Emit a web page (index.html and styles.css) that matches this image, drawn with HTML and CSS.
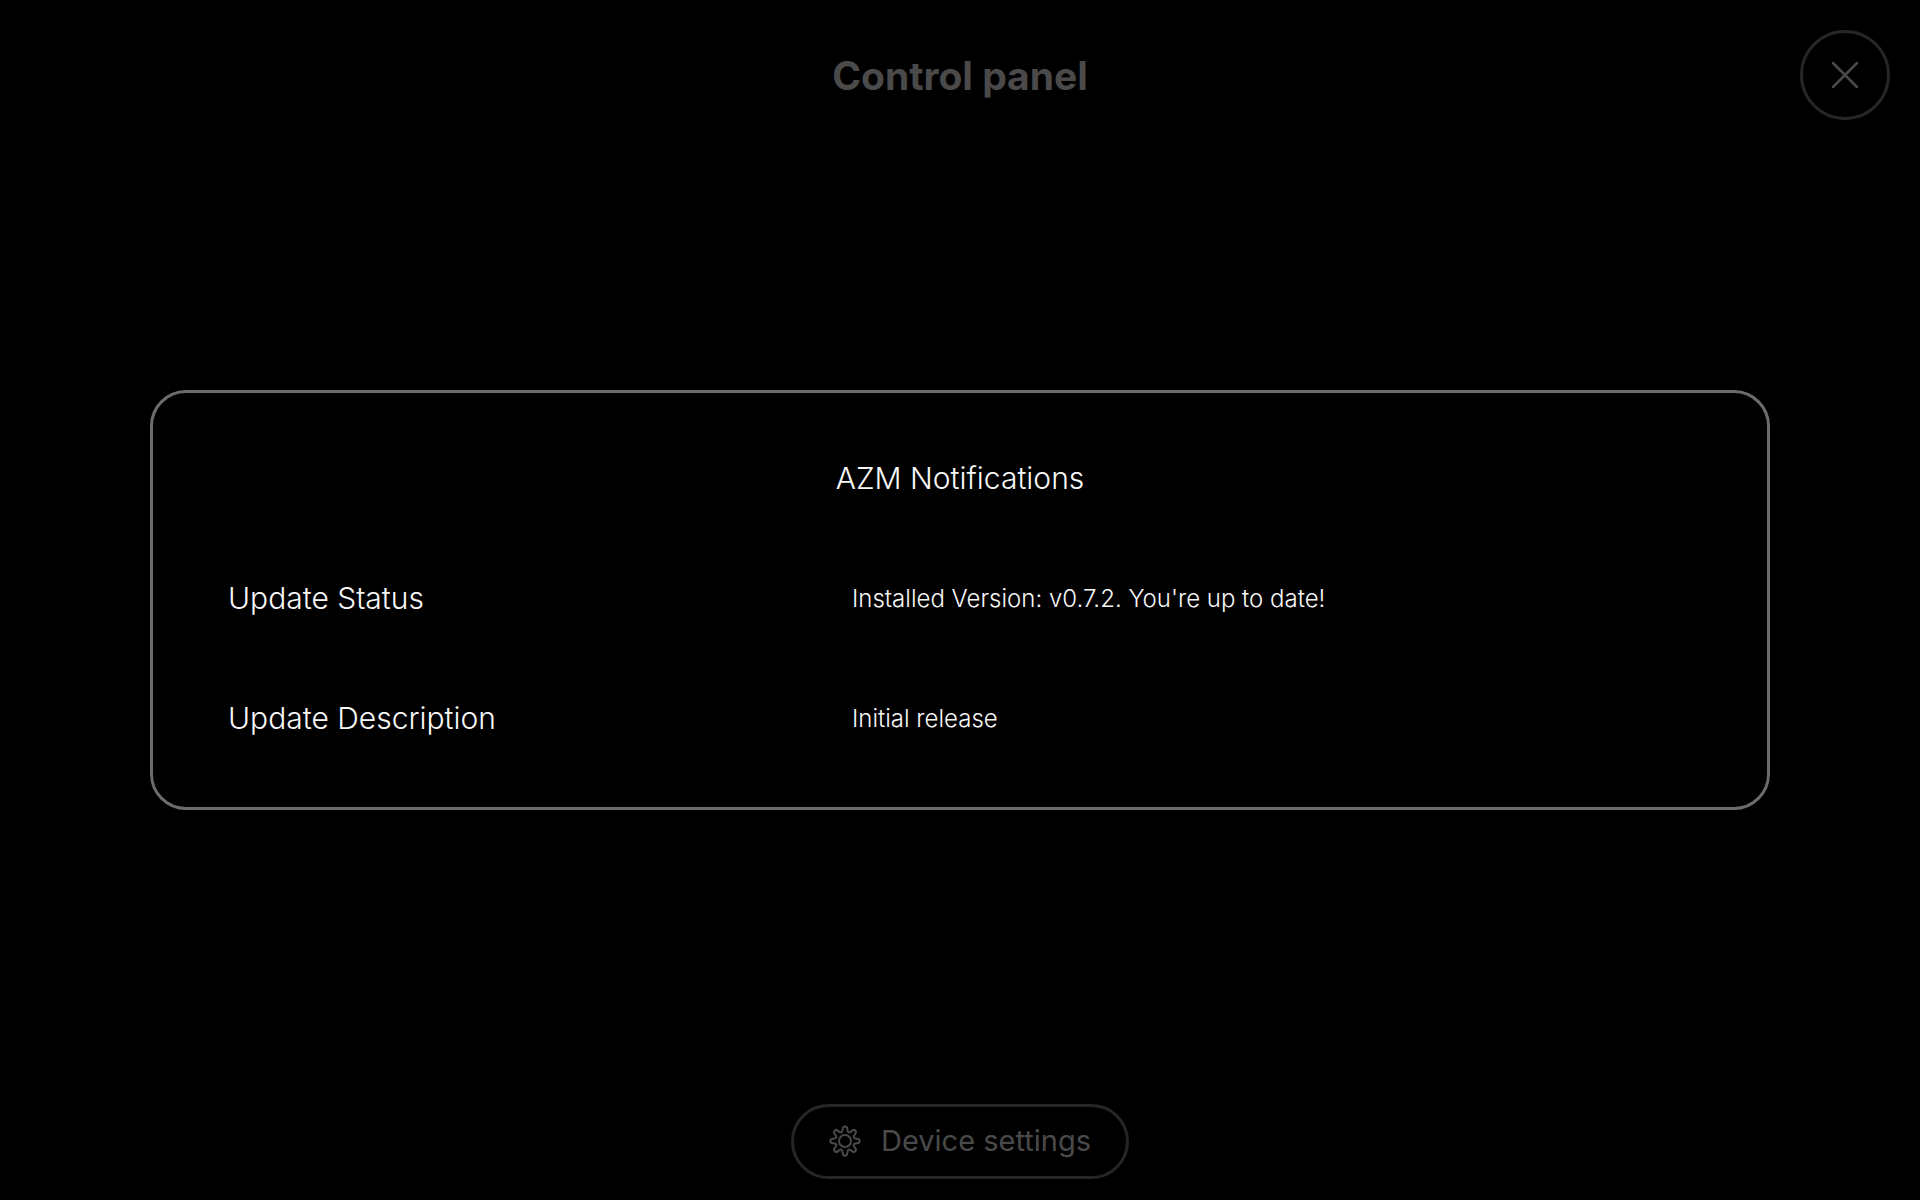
FILE: index.html
```html
<!DOCTYPE html>
<html lang="en">
<head>
<meta charset="utf-8">
<meta name="viewport" content="width=device-width, initial-scale=1">
<title>Control panel</title>
<link rel="stylesheet" href="styles.css">
</head>
<body>
<div class="screen">
  <header class="topbar">
    <h1 class="title">Control panel</h1>
    <button class="close" type="button" aria-label="Close">
      <svg class="close-icon" viewBox="0 0 28 28" aria-hidden="true"><path d="M2 2 26 26M26 2 2 26"/></svg>
    </button>
  </header>
  <main class="content">
    <section class="panel">
      <h2 class="panel-title">AZM Notifications</h2>
      <dl class="rows">
        <div class="row">
          <dt class="label">Update Status</dt>
          <dd class="value">Installed Version: v0.7.2. You're up to date!</dd>
        </div>
        <div class="row">
          <dt class="label">Update Description</dt>
          <dd class="value">Initial release</dd>
        </div>
      </dl>
    </section>
  </main>
  <footer class="footer">
    <button class="settings" type="button">
      <svg class="gear" viewBox="-16 -16 32 32" aria-hidden="true">
        <defs>
          <path id="teeth" d="M-2.1-13Q-2-14.6 0-14.6 2-14.6 2.1-13L2.6-10.4Q3-7.6 5.5-9.2L7.7-10.7Q8.9-11.7 10.3-10.3 11.7-8.9 10.7-7.7L9.2-5.5Q7.6-3 10.4-2.6L13-2.1"/>
        </defs>
        <use href="#teeth"/>
        <use href="#teeth" transform="rotate(90)"/>
        <use href="#teeth" transform="rotate(180)"/>
        <use href="#teeth" transform="rotate(270)"/>
        <circle r="6"/>
      </svg>
      <span>Device settings</span>
    </button>
  </footer>
</div>
</body>
</html>
```
FILE: styles.css
```css
* {
  box-sizing: border-box;
}

body {
  margin: 0;
  background: #000;
  color: #f7f7f7;
  font-family: Inter, "Liberation Sans", sans-serif;
  font-weight: 300;
}

.screen {
  display: flex;
  flex-direction: column;
  min-height: 100vh;
}

.topbar {
  display: grid;
  grid-template-columns: 90px 1fr 90px;
  align-items: center;
  padding: 30px;
}

.title {
  grid-column: 2;
  margin: 0;
  padding-top: 2px;
  font-size: 39px;
  line-height: 48px;
  font-weight: 700;
  text-align: center;
  color: #4a4a4a;
}

.close {
  display: grid;
  place-items: center;
  width: 90px;
  height: 90px;
  padding: 0;
  border: 3px solid #262626;
  border-radius: 50%;
  background: transparent;
  color: #4a4a4a;
}

.close-icon {
  width: 28px;
  height: 28px;
  fill: none;
  stroke: currentColor;
  stroke-width: 2.5;
  stroke-linecap: round;
}

.content {
  display: flex;
  flex: 1;
  flex-direction: column;
  justify-content: center;
  padding: 0 150px;
}

.panel {
  padding: 25px 75px 29px;
  border: 3px solid #6c6c6c;
  border-radius: 36px;
}

.panel-title,
.label {
  margin: 0;
  font-size: 30px;
  line-height: 120px;
  font-weight: 300;
}

.panel-title {
  text-align: center;
}

.rows {
  margin: 0;
}

.row {
  display: grid;
  grid-template-columns: 5fr 7fr;
  align-items: center;
  column-gap: 24px;
}

.value {
  margin: 0;
  font-size: 24px;
}

.footer {
  display: flex;
  justify-content: center;
  padding: 54px 30px 21px;
}

.settings {
  display: flex;
  align-items: center;
  gap: 20px;
  height: 75px;
  padding: 0 35px 2px;
  border: 3px solid #262626;
  border-radius: 38px;
  background: transparent;
  color: #4a4a4a;
  font: 400 29px/36px Inter, "Liberation Sans", sans-serif;
}

.gear {
  width: 32px;
  height: 32px;
  fill: none;
  stroke: currentColor;
  stroke-width: 2;
  stroke-linejoin: round;
}
```
